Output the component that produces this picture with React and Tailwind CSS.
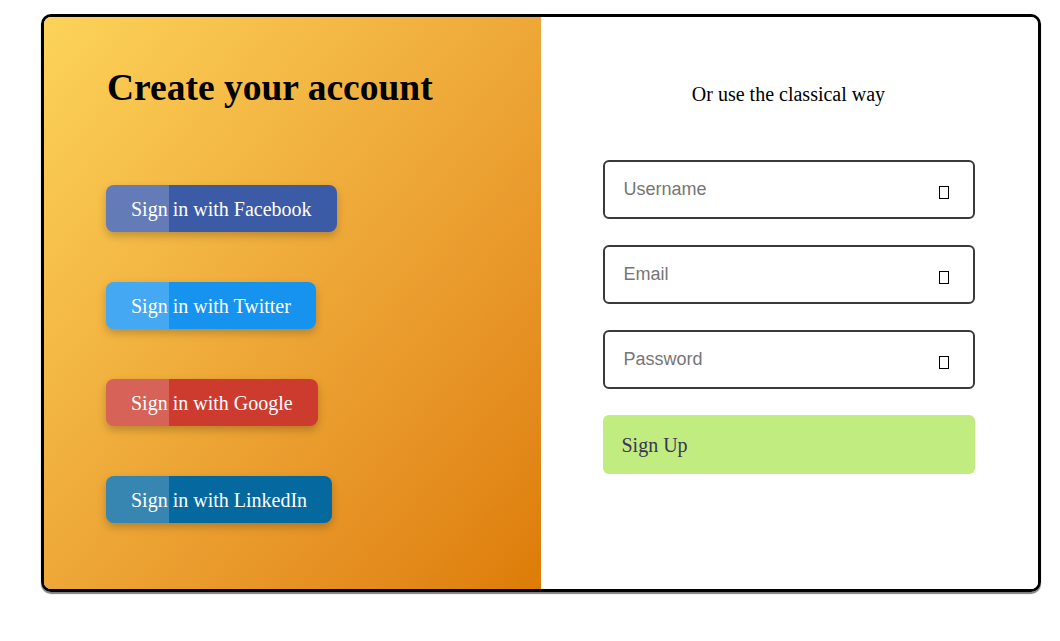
const socials = [
  { label: 'Sign in with Facebook', bg: 'bg-[#3c5ba6]' },
  { label: 'Sign in with Twitter', bg: 'bg-[#1693ef]' },
  { label: 'Sign in with Google', bg: 'bg-[#cd3b2f]' },
  { label: 'Sign in with LinkedIn', bg: 'bg-[#05689f]' },
];

const fields = ['Username', 'Email', 'Password'];

function SocialButton({ label, bg }) {
  return (
    <button
      className={`relative flex h-[47px] w-fit items-center overflow-hidden rounded-[8px] px-[25px] text-[20px] text-white shadow-[0_4px_8px_rgba(0,0,0,0.22)] ${bg}`}
    >
      {/* lighter strip on the left */}
      <span className="absolute inset-y-0 left-0 w-[63px] bg-white/20" />
      <span className="relative">{label}</span>
    </button>
  );
}

function Field({ placeholder }) {
  return (
    <div className="flex h-[59px] w-[372px] items-center justify-between rounded-[6px] border-2 border-[#3a3a3a] bg-white pl-[19px] pr-[24px]">
      <input
        placeholder={placeholder}
        className="w-[250px] bg-transparent text-[18px] text-[#222] outline-none placeholder:text-[#767676]"
        style={{ fontFamily: '"Liberation Sans", Arial, sans-serif' }}
      />
      {/* missing icon glyph box */}
      <span className="mt-[6px] h-[13px] w-[10px] border border-black" />
    </div>
  );
}

export default function App() {
  return (
    <div
      className="min-h-[641px] bg-white pl-[41px] pt-[14px]"
      style={{ fontFamily: '"Liberation Serif", "Times New Roman", serif' }}
    >
      <div className="flex h-[578px] w-[1000px] overflow-hidden rounded-[10px] border-[3px] border-black shadow-[0_2px_1px_rgba(0,0,0,0.5)]">
        {/* Left panel */}
        <div className="flex w-[497px] flex-col bg-linear-to-br from-[#fcd358] to-[#dd7c05] pl-[62px] pt-[50px]">
          <h1 className="ml-[1px] text-[37.5px] font-bold leading-[42px] text-black">Create your account</h1>
          <div className="mt-[76px] flex flex-col gap-[50px]">
            {socials.map((s) => (
              <SocialButton key={s.label} {...s} />
            ))}
          </div>
        </div>

        {/* Right panel */}
        <div className="flex flex-1 flex-col items-center bg-white pr-[2px] pt-[66px]">
          <p className="text-[20px] leading-[23px] text-black">Or use the classical way</p>
          <div className="mt-[54px] flex flex-col gap-[26px]">
            {fields.map((f) => (
              <Field key={f} placeholder={f} />
            ))}
            <button className="flex h-[59px] w-[372px] items-center rounded-[6px] bg-[#c0ec80] pl-[19px] text-[20px] text-[#3a3556]">
              Sign Up
            </button>
          </div>
        </div>
      </div>
    </div>
  );
}
